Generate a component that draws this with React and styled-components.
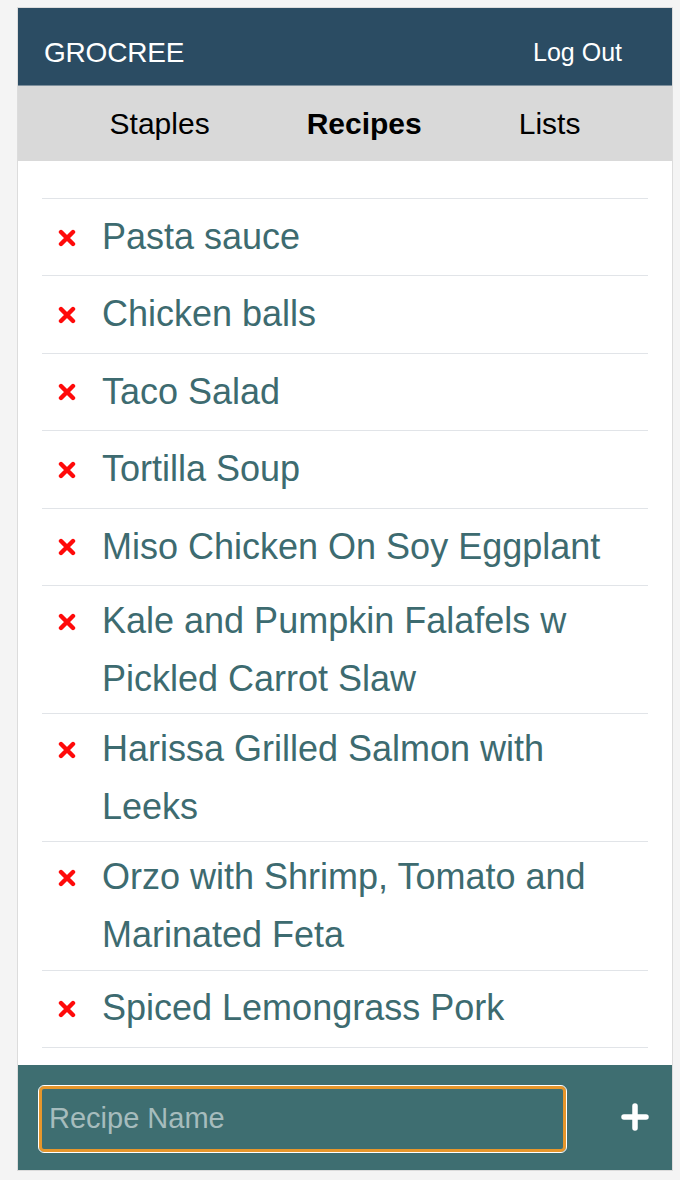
import React from 'react';
import styled, { createGlobalStyle } from 'styled-components';

const GlobalStyle = createGlobalStyle`
	html, body {
		margin: 0;
		padding: 0;
		background: #f4f4f4;
		font-family: "Liberation Sans", Arial, sans-serif;
	}
	* {
		box-sizing: border-box;
	}
`;

const Page = styled.div`
	padding: 7px 0 0 17px;
`;

const Frame = styled.div`
	width: 656px;
	border: 1px solid #dcdcdc;
	background: #fff;
`;

const Header = styled.header`
	display: flex;
	justify-content: space-between;
	align-items: center;
	height: 78px;
	padding: 12px 50px 0 26px;
	background-color: #2b4c63;
	border-bottom: 1px solid #7d8f9c;
	color: #fff;
`;

const Logo = styled.h1`
	margin: 0;
	font-size: 28px;
	font-weight: 400;
	letter-spacing: -0.2px;
`;

const LogOut = styled.button`
	background: none;
	border: 0;
	padding: 0;
	color: #fff;
	font-family: inherit;
	font-size: 25px;
`;

const Nav = styled.nav`
	display: flex;
	justify-content: center;
	align-items: center;
	gap: 97px;
	height: 75px;
	background-color: #d9d9d9;
`;

const NavItem = styled.a`
	font-size: 30px;
	color: #000;
	font-weight: ${(p) => (p.$active ? 700 : 400)};
	text-decoration: none;
`;

const Content = styled.main`
	padding: 37px 24px 17px;
`;

const List = styled.ul`
	list-style: none;
	margin: 0;
	padding: 0;
	border-bottom: 1px solid #e1e4e8;
`;

const Row = styled.li`
	display: flex;
	align-items: center;
	min-height: 77.4px;
	padding: 6px 0;
	border-top: 1px solid #e1e4e8;
`;

const Item = styled.div`
	display: flex;
	align-items: flex-start;
	gap: 26px;
	padding-left: 16px;
`;

const Remove = styled.button`
	display: flex;
	align-items: center;
	height: 57.5px;
	flex: none;
	background: none;
	border: 0;
	padding: 0;
	margin-top: 1px;
	cursor: pointer;
`;

const Name = styled.span`
	font-size: 36px;
	line-height: 57.6px;
	color: #3d6b70;
`;

const Footer = styled.form`
	display: flex;
	align-items: center;
	height: 105px;
	padding: 0 0 0 20px;
	background-color: #3e6e71;
`;

const Input = styled.input`
	flex: 1;
	height: 68px;
	margin-top: 3px;
	padding: 0 10px;
	border: 1px solid #fff;
	border-radius: 6px;
	box-shadow: inset 0 0 0 3px #e6962b;
	background: transparent;
	color: #fff;
	font-family: inherit;
	font-size: 29px;
	caret-color: #fff;
	outline: none;

	&::placeholder {
		color: #a6bcbd;
	}
`;

const AddButton = styled.button`
	display: flex;
	justify-content: center;
	align-items: center;
	width: 74px;
	margin-left: 31px;
	height: 68px;
	background: none;
	border: 0;
	padding: 0;
	cursor: pointer;
`;

const CrossIcon = () => (
	<svg width="18" height="18" viewBox="0 0 18 18">
		<path d="M3 3 L15 15 M15 3 L3 15" stroke="#ff0a0a" strokeWidth="4.4" strokeLinecap="round" />
	</svg>
);

const PlusIcon = () => (
	<svg width="28" height="28" viewBox="0 0 28 28">
		<path d="M14 3 V25 M3 14 H25" stroke="#fff" strokeWidth="5.5" strokeLinecap="round" />
	</svg>
);

const recipes = [
	'Pasta sauce',
	'Chicken balls',
	'Taco Salad',
	'Tortilla Soup',
	'Miso Chicken On Soy Eggplant',
	'Kale and Pumpkin Falafels w Pickled Carrot Slaw',
	'Harissa Grilled Salmon with Leeks',
	'Orzo with Shrimp, Tomato and Marinated Feta',
	'Spiced Lemongrass Pork',
];

const App = () => {
	return (
		<Page>
			<GlobalStyle />
			<Frame>
				<Header>
					<Logo>GROCREE</Logo>
					<LogOut>Log Out</LogOut>
				</Header>
				<Nav>
					<NavItem>Staples</NavItem>
					<NavItem $active>Recipes</NavItem>
					<NavItem>Lists</NavItem>
				</Nav>
				<Content>
					<List>
						{recipes.map((name) => (
							<Row key={name}>
								<Item>
									<Remove aria-label="remove">
										<CrossIcon />
									</Remove>
									<Name>{name}</Name>
								</Item>
							</Row>
						))}
					</List>
				</Content>
				<Footer onSubmit={(e) => e.preventDefault()}>
					<Input autoFocus placeholder="Recipe Name" />
					<AddButton type="submit" aria-label="add">
						<PlusIcon />
					</AddButton>
				</Footer>
			</Frame>
		</Page>
	);
};

export default App;
